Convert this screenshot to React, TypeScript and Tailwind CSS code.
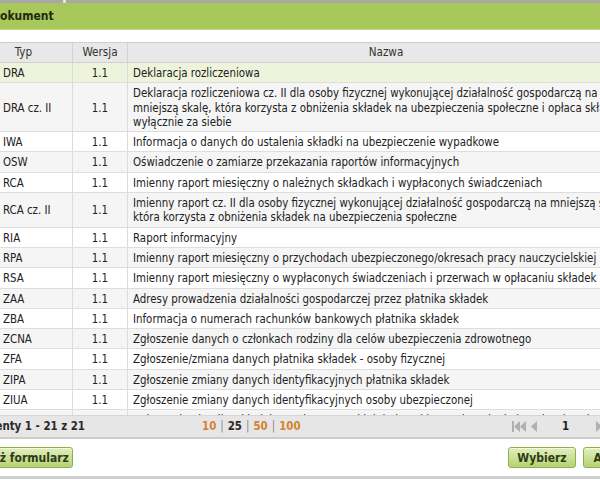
import React from 'react'

interface Row {
  typ: string
  name: React.ReactNode
}

const rows: Row[] = [
  { typ: 'DRA', name: 'Deklaracja rozliczeniowa' },
  {
    typ: 'DRA cz. II',
    name: (
      <>
        Deklaracja rozliczeniowa cz. II dla osoby fizycznej wykonującej działalność gospodarczą na
        <br />
        mniejszą skalę, która korzysta z obniżenia składek na ubezpieczenia społeczne i opłaca składki
        <br />
        wyłącznie za siebie
      </>
    ),
  },
  { typ: 'IWA', name: 'Informacja o danych do ustalenia składki na ubezpieczenie wypadkowe' },
  { typ: 'OSW', name: 'Oświadczenie o zamiarze przekazania raportów informacyjnych' },
  { typ: 'RCA', name: 'Imienny raport miesięczny o należnych składkach i wypłaconych świadczeniach' },
  {
    typ: 'RCA cz. II',
    name: (
      <>
        Imienny raport cz. II dla osoby fizycznej wykonującej działalność gospodarczą na mniejszą skalę,
        <br />
        która korzysta z obniżenia składek na ubezpieczenia społeczne
      </>
    ),
  },
  { typ: 'RIA', name: 'Raport informacyjny' },
  { typ: 'RPA', name: 'Imienny raport miesięczny o przychodach ubezpieczonego/okresach pracy nauczycielskiej' },
  { typ: 'RSA', name: 'Imienny raport miesięczny o wypłaconych świadczeniach i przerwach w opłacaniu składek' },
  { typ: 'ZAA', name: 'Adresy prowadzenia działalności gospodarczej przez płatnika składek' },
  { typ: 'ZBA', name: 'Informacja o numerach rachunków bankowych płatnika składek' },
  { typ: 'ZCNA', name: 'Zgłoszenie danych o członkach rodziny dla celów ubezpieczenia zdrowotnego' },
  { typ: 'ZFA', name: 'Zgłoszenie/zmiana danych płatnika składek - osoby fizycznej' },
  { typ: 'ZIPA', name: 'Zgłoszenie zmiany danych identyfikacyjnych płatnika składek' },
  { typ: 'ZIUA', name: 'Zgłoszenie zmiany danych identyfikacyjnych osoby ubezpieczonej' },
  { typ: 'ZPA', name: 'Zgłoszenie płatnika składek - osoby prawnej lub jednostki organizacyjnej niemającej osobowości prawnej' },
  { typ: 'ZUA', name: 'Zgłoszenie do ubezpieczeń/zgłoszenie zmiany danych osoby ubezpieczonej' },
]

const font = { fontFamily: '"DejaVu Sans Condensed", "DejaVu Sans", sans-serif' }

function GreenButton({ children, className }: { children: React.ReactNode; className?: string }) {
  return (
    <button
      className={`h-[21px] rounded-[3px] border border-[#8fae4e] bg-gradient-to-b from-[#e2efbc] to-[#b5d26f] text-[12px] font-bold text-[#2e3a1a] shadow-[inset_0_1px_0_#f3f9df] whitespace-nowrap ${className ?? ''}`}
    >
      {children}
    </button>
  )
}

export default function App() {
  return (
    <div className="w-[600px] h-[480px] overflow-hidden bg-white text-[#222]" style={font}>
      <div className="w-[720px] -ml-[40px] flex flex-col">
        {/* top strip */}
        <div className="h-[3px] bg-[#a7a7a7] flex">
          <div className="w-[103px]" />
          <div className="w-[3px] bg-[#e4e4e4]" />
        </div>

        {/* title bar */}
        <div className="h-[27px] bg-[#a8c85c] flex items-center pl-[31px] text-[12px] font-bold text-[#1f2a10] border-b border-[#bcd67e]">
          Dokument
        </div>

        <div className="h-[12px]" />

        {/* table */}
        <div className="ml-[15px] border-t border-[#cfcfcf]">
          <div className="flex h-[20px] bg-[#e8e8e8] border-b border-[#cfcfcf] text-[11.6px] leading-[19px] text-[#333]">
            <div className="w-[98px] shrink-0 border-r border-[#d2d2d2] text-center">Typ</div>
            <div className="w-[55px] shrink-0 border-r border-[#d2d2d2] text-center">Wersja</div>
            <div className="w-[516px] shrink-0 text-center">Nazwa</div>
          </div>

          <div className="h-[352px] overflow-hidden">
            {rows.map((r, i) => (
              <div
                key={r.typ}
                className={`flex border-b border-[#dedede] text-[11.4px] leading-[14.3px] text-[#222] ${
                  i === 0 ? 'bg-[#eef4dc]' : i % 2 === 1 ? 'bg-[#f5f5f5]' : 'bg-white'
                }`}
              >
                <div className="w-[98px] shrink-0 border-r border-[#dcdcdc] pl-[28px] pt-[3px] pb-[2px] flex items-center whitespace-nowrap">
                  {r.typ}
                </div>
                <div className="w-[55px] shrink-0 border-r border-[#dcdcdc] pt-[3px] pb-[2px] flex items-center justify-center">
                  1.1
                </div>
                <div className="flex-1 pl-[5px] pt-[3px] pb-[2px] whitespace-nowrap overflow-hidden">{r.name}</div>
              </div>
            ))}
          </div>

          {/* pager */}
          <div className="h-[24px] bg-[#e6e6e6] border-t border-[#d6d6d6] border-b-2 border-b-[#cdcdcd] flex items-center text-[11.4px] font-bold">
            <div className="w-[110px] shrink-0 flex justify-end">
              <span className="text-[#2a2a2a] whitespace-nowrap">Elementy 1 - 21 z 21</span>
            </div>
            <div className="ml-[117px] w-[110px] shrink-0 flex items-center gap-[4px] whitespace-nowrap">
              <span className="text-[#d5812f]">10</span>
              <span className="text-[#8a8a8a] font-normal">|</span>
              <span className="text-[#2a2a2a]">25</span>
              <span className="text-[#8a8a8a] font-normal">|</span>
              <span className="text-[#d5812f]">50</span>
              <span className="text-[#8a8a8a] font-normal">|</span>
              <span className="text-[#d5812f]">100</span>
            </div>
            <div className="ml-[200px] flex items-center">
              <svg width="16" height="11" viewBox="0 0 16 11" className="fill-[#b0b0b0]">
                <rect x="0" y="0" width="2" height="11" />
                <polygon points="8,0 2,5.5 8,11" />
                <polygon points="14,0 8,5.5 14,11" />
              </svg>
              <svg width="7" height="11" viewBox="0 0 7 11" className="ml-[3px] fill-[#b0b0b0]">
                <polygon points="6,0 0,5.5 6,11" />
              </svg>
            </div>
            <div className="ml-[24px] text-[#222]">1</div>
            <svg width="7" height="11" viewBox="0 0 7 11" className="ml-[27px] fill-[#b0b0b0]">
              <polygon points="0,0 6,5.5 0,11" />
            </svg>
          </div>
        </div>

        {/* buttons */}
        <div className="h-[40px] flex items-center border-b-[3px] border-[#d0d0d0]">
          <GreenButton className="ml-[2px] w-[111px] pl-[7px] text-left">Pokaż formularz</GreenButton>
          <GreenButton className="ml-[435px] w-[68px]">Wybierz</GreenButton>
          <GreenButton className="ml-[7px] w-[60px]">Anuluj</GreenButton>
        </div>
      </div>
    </div>
  )
}
